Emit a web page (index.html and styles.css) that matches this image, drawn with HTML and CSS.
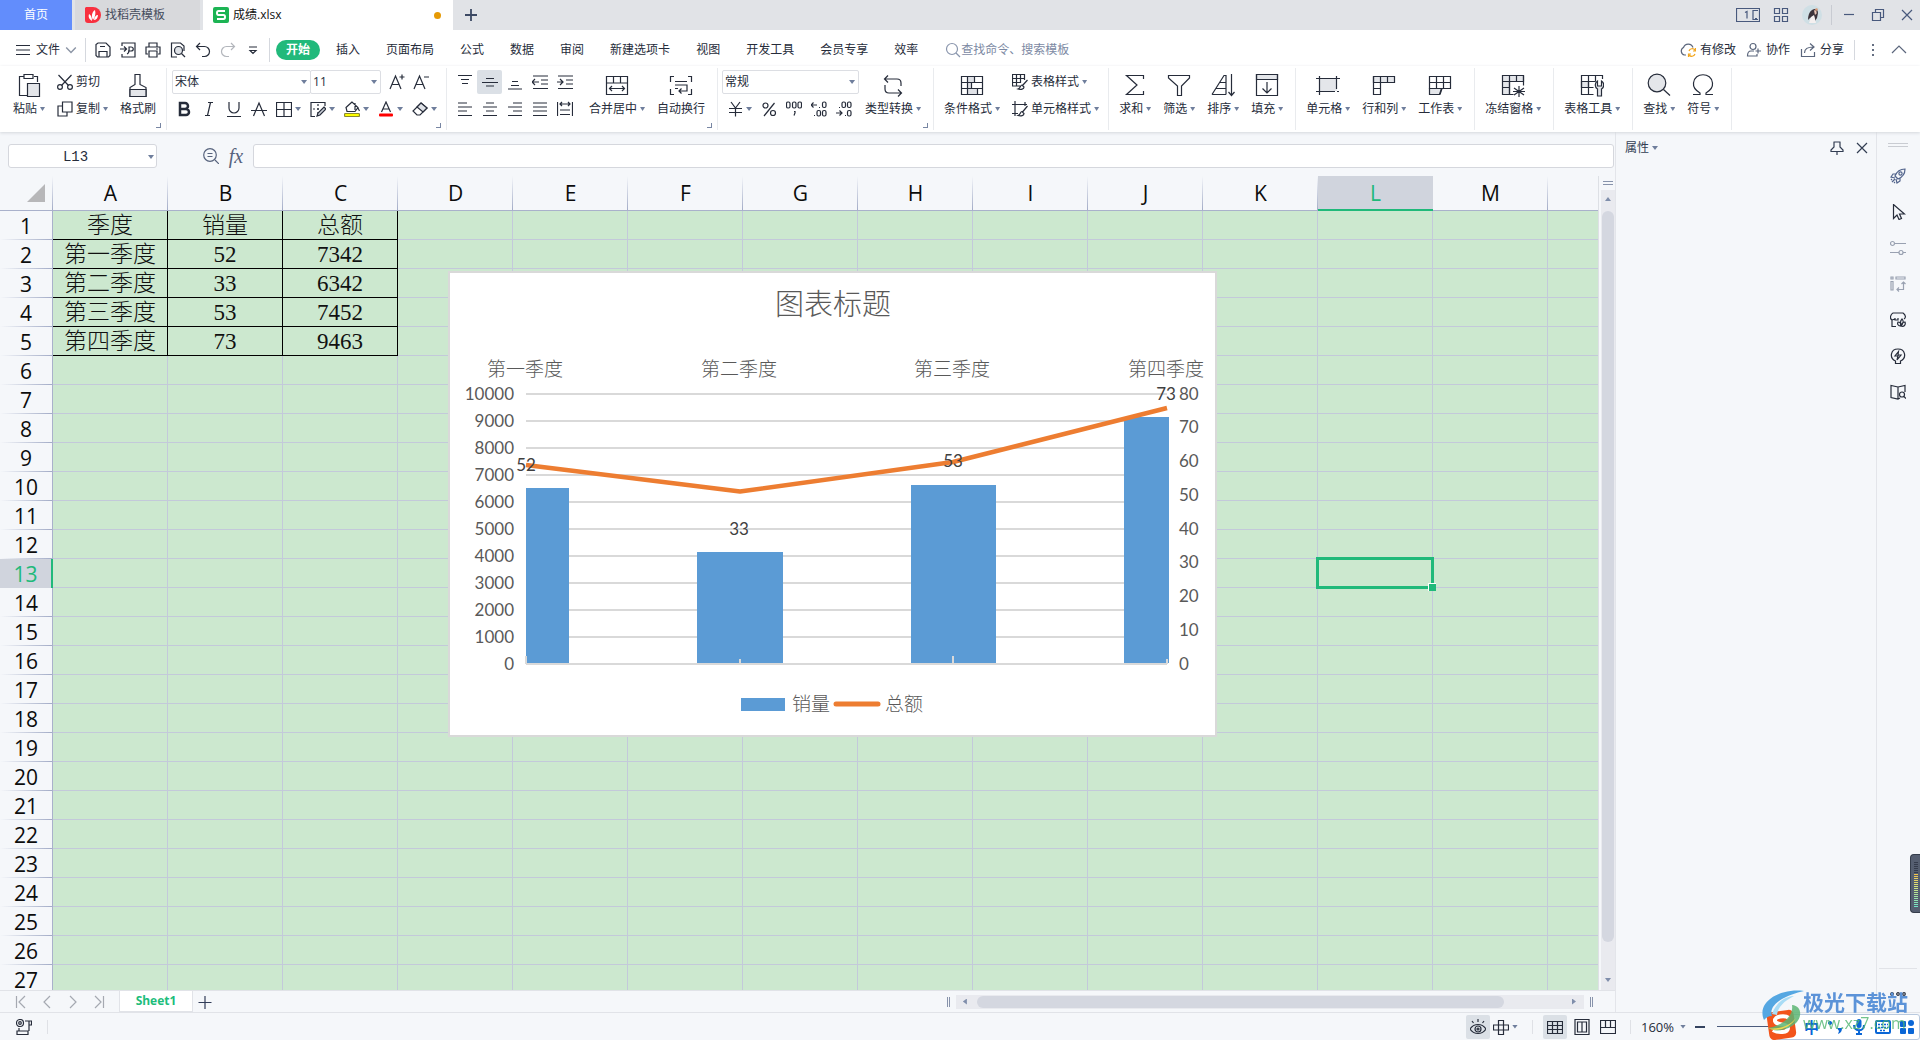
FILE: index.html
```html
<!DOCTYPE html>
<html lang="zh-CN">
<head>
<meta charset="utf-8">
<title>成绩.xlsx</title>
<link rel="stylesheet" href="styles.css">
</head>
<body>
<header class="titlebar">
  <button class="tab tab-home">首页</button>
  <button class="tab tab-docer"><svg class="logo" viewBox="0 0 16 16"><path d="M1 0h7a8 8 0 0 1 0 16H3a3 3 0 0 1-3-3V1z" fill="#f8303f"/><path d="M7 14C4 12 3 10 4 7c2 1 3 3 3 7zM8 13C6 9 7 5 10 3c1 4 0 7-2 10zM9 13c0-3 2-5 4-5 0 3-2 5-4 5z" fill="#fff"/></svg>找稻壳模板</button>
  <button class="tab tab-file"><svg class="logo" viewBox="0 0 16 16"><rect width="16" height="16" rx="2" fill="#1cb454"/><path d="M12 4H5.500Q4 4 4 6t1.500 2h5Q12 8 12 10t-1.500 2H4" fill="none" stroke="#fff" stroke-width="2"/></svg>成绩.xlsx<i class="dot"></i></button>
  <button class="new-tab" aria-label="新建"><svg class="i s16" viewBox="0 0 16 16"><path d="M8 2v12M2 8h12" stroke-width="1.800"/></svg></button>
  <div class="window-tools">
    <button aria-label="窗口"><svg class="i w24" viewBox="0 0 24 16"><path d="M.5 1.500h23v13H.5zM22 3.500h-5v9h5M9 5.500l2-1v7M19 11.500h2"/></svg></button>
    <button aria-label="应用"><svg class="i s16" viewBox="0 0 16 16"><path d="M1.500 1.500h5v5h-5zM9.500 1.500h5v5h-5zM1.500 9.500h5v5h-5zM9.500 9.500h5v5h-5z"/></svg></button>
    <button aria-label="账户"><svg class="s20" viewBox="0 0 20 20"><circle cx="10" cy="10" r="10" fill="#cfdfe5"/><path d="M10 5c3-2 6-1 6 3l-1 5-2 3-1-5-4 2-2 2c0-4 1-8 4-10z" fill="#3c343c"/><path d="M12 5.500c2-1 3 1 2.500 3L13 10z" fill="#e9c5b5"/><path d="M9 12l3-2 2 8H7z" fill="#f5f0f0"/><circle cx="14.500" cy="4.500" r="1.300" fill="#d99a78"/></svg></button>
    <span class="vline"></span>
    <button aria-label="最小化"><svg class="i s16" viewBox="0 0 16 16"><path d="M3 7.500h10"/></svg></button>
    <button aria-label="还原"><svg class="i s16" viewBox="0 0 16 16"><path d="M2.500 5.500h8v8h-8zM5.500 5V2.500h8v8H11"/></svg></button>
    <button aria-label="关闭"><svg class="i s16" viewBox="0 0 16 16"><path d="M3 3l10 10M13 3L3 13"/></svg></button>
  </div>
</header>

<nav class="menubar">
  <button class="file-menu"><svg class="i s16" viewBox="0 0 16 16"><path d="M1 3.500h14M1 8h14M1 12.500h14"/></svg>文件<svg class="i chev" viewBox="0 0 10 10"><path d="M1 3l4 4 4-4"/></svg></button>
  <span class="vline"></span>
  <div class="quick">
    <button aria-label="保存"><svg class="i s16" viewBox="0 0 16 16"><path d="M3 1h8l4 4v8.500L13.500 15h-11L1 13.500v-11zM4 15V9.500h8V15M5 4.500h5"/></svg></button>
    <button aria-label="输出PDF"><svg class="i s16" viewBox="0 0 16 16"><path d="M2 4V1h13v14H2v-3M0 7h6M4 4.500L6.500 7 4 9.500M7 12c3-1 2-5 2-7h2c3 0 3 4 0 4H8"/></svg></button>
    <button aria-label="打印"><svg class="i s16" viewBox="0 0 16 16"><path d="M4 5V1h8v4M3 12H1V5h14v7h-2M4 9h8v6H4zM11 7h2"/></svg></button>
    <button aria-label="打印预览"><svg class="i s16" viewBox="0 0 16 16"><path d="M7 15H1.500V1h9L14 4v5"/><circle cx="8.500" cy="8.500" r="4" fill="#dfe2e7"/><path d="M11.500 11.500L15 15"/></svg></button>
    <button aria-label="撤销"><svg class="i s16" viewBox="0 0 16 16"><path d="M5 1L1.500 4.500 5 8M2 4.500h7.500a5 5 0 0 1 0 10H7"/></svg></button>
    <button aria-label="恢复" class="off"><svg class="i s16" viewBox="0 0 16 16"><path d="M11 1l3.500 3.500L11 8M14 4.500H6.500a5 5 0 0 0 0 10H9"/></svg></button>
    <button aria-label="自定义"><svg class="i s16" viewBox="0 0 16 16"><path d="M4 5h8M5 8.500h6L8 11.500z"/></svg></button>
  </div>
  <span class="vline"></span>
  <div class="tabs">
    <button class="on">开始</button><button>插入</button><button>页面布局</button><button>公式</button><button>数据</button><button>审阅</button><button>新建选项卡</button><button>视图</button><button>开发工具</button><button>会员专享</button><button>效率</button>
  </div>
  <label class="search"><svg class="i s16" viewBox="0 0 16 16"><circle cx="7" cy="7" r="5.500"/><path d="M11 11l4 4"/></svg><input type="text" placeholder="查找命令、搜索模板" aria-label="查找命令"></label>
  <div class="share">
    <button><svg class="i s16" viewBox="0 0 16 16"><path d="M6 13H4.500a4 4 0 0 1-1-7.500 5 5 0 0 1 9.500 0"/><path d="M9 9a3.500 3.500 0 0 1 6-1M15 12a3.500 3.500 0 0 1-6 1M15.500 6v3H13M8.500 15v-3H11" stroke="#f2a51d"/></svg>有修改</button>
    <button><svg class="i s16" viewBox="0 0 16 16"><circle cx="7" cy="4.500" r="3"/><path d="M8 9H5C2.500 9 1.500 10.500 1.500 14H11v-2M12 6.500v5M9.500 9H15"/></svg>协作</button>
    <button><svg class="i s16" viewBox="0 0 16 16"><path d="M1.500 7v7.500h13V10M4.500 11c0-4 3-6 9-6M10 1.500L14 5l-4 3.500"/></svg>分享</button>
    <span class="vline"></span>
    <button aria-label="更多"><svg class="s16" viewBox="0 0 16 16" fill="#656f82"><path d="M7 2h2v2H7zM7 7h2v2H7zM7 12h2v2H7z"/></svg></button>
    <button aria-label="收起"><svg class="i s16" viewBox="0 0 16 16"><path d="M1 11l7-7 7 7"/></svg></button>
  </div>
</nav>

<section class="ribbon">
  <div class="group clip">
    <button class="big"><svg class="i s24" viewBox="0 0 24 24"><path d="M7 3.500H2.500v19H10M17 3.500h3.500V9M7 1.500h9v4H7z"/><path d="M10.500 10.500h12v13h-12z" fill="#e4e6ea"/></svg><span>粘贴<i class="caret"></i></span></button>
    <div class="rows">
      <button class="small"><svg class="i s16" viewBox="0 0 16 16"><path d="M1.500 1l10 10.500M14.500 1l-10 10.500"/><circle cx="3" cy="13" r="2.400"/><circle cx="13" cy="13" r="2.400"/></svg>剪切</button>
      <button class="small"><svg class="i s16" viewBox="0 0 16 16"><path d="M5.500 1h9.500v10H5.500zM5 5H1v10h9v-4"/></svg>复制<i class="caret"></i></button>
    </div>
    <button class="big"><svg class="i s24" viewBox="0 0 24 24"><path d="M4 23.500v-9l5-3V1.500h5v10l6 3v9z"/><path d="M4 16.500h16v7H4z" fill="#e4e6ea"/></svg><span>格式刷</span></button>
    <i class="launch"></i>
  </div>
  <div class="group font">
    <div class="rows">
      <div class="line">
        <span class="combos"><span class="combo name"><select aria-label="字体"><option>宋体</option></select><i class="caret"></i></span><span class="combo size"><select aria-label="字号"><option>11</option></select><i class="caret"></i></span></span>
        <button aria-label="增大字号"><svg class="i s16" viewBox="0 0 16 16"><path d="M1 15L6.500 2 12 15M3 10.500h7M13 .5v5M10.500 3h5"/></svg></button>
        <button aria-label="减小字号"><svg class="i s16" viewBox="0 0 16 16"><path d="M1 15L6.500 2 12 15M3 10.500h7M11 3h5"/></svg></button>
      </div>
      <div class="line tools">
        <button aria-label="加粗"><svg class="i s16" viewBox="0 0 16 16"><path d="M4 2h5a3 3 0 0 1 0 6H4zM4 8h6a3 3 0 0 1 0 6H4z" stroke-width="2.500"/></svg></button>
        <button aria-label="倾斜"><svg class="i s16" viewBox="0 0 16 16"><path d="M7 1.500h5M4 14.500h5M9.500 1.500l-3 13"/></svg></button>
        <button aria-label="下划线"><svg class="i s16" viewBox="0 0 16 16"><path d="M3 1v6a5 5 0 0 0 10 0V1M1 15.500h14"/></svg></button>
        <button aria-label="删除线"><svg class="i s16" viewBox="0 0 16 16"><path d="M2.500 15L8 2l5.500 13M0 9.500h16"/></svg></button>
        <button aria-label="边框"><svg class="i s16" viewBox="0 0 16 16"><path d="M.5 1.500h15v14H.5zM8 1.500v14M.5 8.500h15"/></svg><i class="caret"></i></button>
        <button aria-label="绘制边框"><svg class="i s16" viewBox="0 0 16 16"><path d="M15 5V1.500H1v14h4"/><path d="M8 3v11M3 8h7" stroke-dasharray="2 2"/><path d="M14 6l2 2-6 6-3 1 1-3z" fill="#c9ced6"/></svg><i class="caret"></i></button>
        <button aria-label="填充颜色"><svg class="i s16" viewBox="0 0 16 16"><path d="M8 1L2 6.500l1 4h8l3-4zM11 2v7M14 7l1.500 3"/><rect x=".5" y="12.500" width="15" height="3" rx="1" fill="#ff0" stroke="#8a8a30"/></svg><i class="caret"></i></button>
        <button aria-label="字体颜色"><svg class="i s16" viewBox="0 0 16 16"><path d="M3.500 11L8 1l4.500 10M5 8h6"/><rect x="1" y="12.500" width="14" height="3" rx="1" fill="red" stroke="none"/></svg><i class="caret"></i></button>
        <button aria-label="清除"><svg class="i s16" viewBox="0 0 16 16"><path d="M9 2l6 5-7 7H5L1 10z"/><path d="M9 2l6 5-4 4-6-5z" fill="#dfe2e7"/></svg><i class="caret"></i></button>
      </div>
    </div>
    <i class="launch"></i>
  </div>
  <div class="group align">
    <div class="cells">
      <button aria-label="顶端对齐"><svg class="i s16" viewBox="0 0 16 16"><path d="M1 1.500h14M4 5.500h8M5 9.500h6"/></svg></button>
      <button aria-label="垂直居中" class="on"><svg class="i s16" viewBox="0 0 16 16"><path d="M4 4.500h8M0 8.500h16M4 12h8"/></svg></button>
      <button aria-label="底端对齐"><svg class="i s16" viewBox="0 0 16 16"><path d="M5 7.500h6M4 11.500h8M1 15h14"/></svg></button>
      <button aria-label="减少缩进"><svg class="i s16" viewBox="0 0 16 16"><path d="M1 2h15M9 6h7M9 10h7M1 14.500h15M0 8h7M3 5L0 8l3 3"/></svg></button>
      <button aria-label="增加缩进"><svg class="i s16" viewBox="0 0 16 16"><path d="M1 2h15M9 6h7M9 10h7M1 14.500h15M0 8h6M3 5l3 3-3 3"/></svg></button>
      <button aria-label="左对齐"><svg class="i s16" viewBox="0 0 16 16"><path d="M1 2h9M1 6h14M1 10h9M1 14.500h14"/></svg></button>
      <button aria-label="居中"><svg class="i s16" viewBox="0 0 16 16"><path d="M4 2h8M1 6h14M4 10h8M1 14.500h14"/></svg></button>
      <button aria-label="右对齐"><svg class="i s16" viewBox="0 0 16 16"><path d="M6 2h9M1 6h14M6 10h9M1 14.500h14"/></svg></button>
      <button aria-label="两端对齐"><svg class="i s16" viewBox="0 0 16 16"><path d="M1 2h14M1 6h14M1 10h14M1 14.500h14"/></svg></button>
      <button aria-label="分散对齐"><svg class="i s16" viewBox="0 0 16 16"><path d="M.5 1v14M15.500 1v14M3 3h10M5 1L3 3l2 2M11 1l2 2-2 2M3 9h10M3 13.500h10"/></svg></button>
    </div>
    <button class="big"><svg class="i s24" viewBox="0 0 24 24"><path d="M1.500 3.500h21v18h-21zM1.500 10h21M8.500 3.500V10M15.500 3.500V10M5 15.500h14M7 13l-2.500 2.500L7 18M17 13l2.500 2.500L17 18"/></svg><span>合并居中<i class="caret"></i></span></button>
    <button class="big"><svg class="i s24" viewBox="0 0 24 24"><path d="M5 3.500H1.500V9M19 3.500h3.500V9M5 21.500H1.500V16M19 21.500h3.500V16M6 8.500h12M6 12h12v6h-8M12.500 15.500L10 18l2.500 2.500M6 15.500h3"/></svg><span>自动换行</span></button>
    <i class="launch"></i>
  </div>
  <div class="group number">
    <div class="rows">
      <span class="combo format"><select aria-label="数字格式"><option>常规</option></select><i class="caret"></i></span>
      <div class="line tools">
        <button aria-label="货币"><svg class="i s16" viewBox="0 0 16 16"><path d="M4 1l4.500 6L13 1M2 7.500h13M2 11.500h13M8.500 7v8.500"/></svg><i class="caret"></i></button>
        <button aria-label="百分比"><svg class="i s16" viewBox="0 0 16 16"><circle cx="4.500" cy="4.500" r="2.500"/><circle cx="12" cy="12" r="2.500"/><path d="M13.500 2L3 15"/></svg></button>
        <button aria-label="千位分隔"><svg class="i s16" viewBox="0 0 16 16"><rect x=".5" y="1" width="3.500" height="6" rx="1.500"/><rect x="6.500" y="1" width="3.500" height="6" rx="1.500"/><rect x="12" y="1" width="3.500" height="6" rx="1.500"/><path d="M8 10.500h1V12l-1 2.500"/></svg></button>
        <button aria-label="增加小数"><svg class="i s16" viewBox="0 0 16 16"><path d="M0 4h6M2.500 1.500L0 4l2.500 2.500M8 6.500h1M3 14.500h1"/><rect x="11.500" y="1" width="3.500" height="5.500" rx="1.500"/><rect x="6" y="9.500" width="3.500" height="5.500" rx="1.500"/><rect x="11.500" y="9.500" width="3.500" height="5.500" rx="1.500"/></svg></button>
        <button aria-label="减少小数"><svg class="i s16" viewBox="0 0 16 16"><path d="M0 12h6M3.500 9.500L6 12l-2.500 2.500M9 14.500h1M3 6.500h1"/><rect x="11.500" y="1" width="3.500" height="5.500" rx="1.500"/><rect x="6" y="1" width="3.500" height="5.500" rx="1.500"/><rect x="11.500" y="9.500" width="3.500" height="5.500" rx="1.500"/></svg></button>
      </div>
    </div>
    <button class="big"><svg class="i s24" viewBox="0 0 24 24"><path d="M7 2.500L3.500 6 7 9.500M4 6h12q4 0 4 4v3M4 12v4q0 4 4 4h12M17 16.500l3.500 3.500-3.500 3.500"/></svg><span>类型转换<i class="caret"></i></span></button>
    <i class="launch"></i>
  </div>
  <div class="group styles">
    <button class="big"><svg class="i s24" viewBox="0 0 24 24"><path d="M8 4h6v6H8zM8 10h4v6H8zM8 16h9v6H8z" fill="#e0e2e7" stroke="none"/><path d="M1.500 3.500h21v18h-21zM1.500 9.500h21M1.500 15.500h21M7.500 3.500v18M14.500 3.500v6M11.500 9.500v6M17.500 15.500v6"/></svg><span>条件格式<i class="caret"></i></span></button>
    <div class="rows">
      <button class="small"><svg class="i s16" viewBox="0 0 16 16"><path d="M8 12H.5V.5h12V6M.5 4.500h12M.5 8.500H9M4.500.5V12M8.500.5V9M15.500 6l-5 5.500M10 11c-2 0-1 3-4 4 3 1 6 0 6-2z"/></svg>表格样式<i class="caret"></i></button>
      <button class="small"><svg class="i s16" viewBox="0 0 16 16"><path d="M0 3.500h15M3 0v15M0 12.500h6M13 1v4M15.500 5l-5 6M10 10.500c-2 0-1 3-4 4 3 1 6 0 6-2z"/></svg>单元格样式<i class="caret"></i></button>
    </div>
  </div>
  <div class="group">
    <button class="big"><svg class="i s24" viewBox="0 0 24 24"><path d="M20.500 6V2.500h-17L14 12 3.500 21.500h17V18"/></svg><span>求和<i class="caret"></i></span></button>
    <button class="big"><svg class="i s24" viewBox="0 0 24 24"><path d="M1.500 2.500h21V5L14.500 13v9.500h-4V13L1.500 5z"/></svg><span>筛选<i class="caret"></i></span></button>
    <button class="big"><svg class="i s24" viewBox="0 0 24 24"><path d="M1 21.500L13 2.500h2v19M1 21.500h14M5 15.500h10M9 9.500h6M20.500 1v21M17.500 19l3 3.500 3-3.500"/></svg><span>排序<i class="caret"></i></span></button>
    <button class="big"><svg class="i s24" viewBox="0 0 24 24"><path d="M1.500 1.500h21v5h-21z" fill="#e4e6ea"/><path d="M1.500 1.500h21v21h-21zM12 9v11M7.500 15.500L12 20l4.500-4.500"/></svg><span>填充<i class="caret"></i></span></button>
  </div>
  <div class="group">
    <button class="big"><svg class="i s24" viewBox="0 0 24 24"><path d="M4 6h17v12H4z" fill="#e4e6ea" stroke="none"/><path d="M0 5.500h24M0 18.500h19M3.500 3v19M20.500 3v13M21 18.500h2"/></svg><span>单元格<i class="caret"></i></span></button>
    <button class="big"><svg class="i s24" viewBox="0 0 24 24"><path d="M1.500 3.500h21v6h-21z" fill="#e4e6ea"/><path d="M1.500 3.500v18h7v-18M15.500 3.500v6M1.500 15.500h7"/></svg><span>行和列<i class="caret"></i></span></button>
    <button class="big"><svg class="i s24" viewBox="0 0 24 24"><path d="M1.500 15.500h12l-2 6h-10z" fill="#e4e6ea"/><path d="M22.500 15.500V3.500h-21v12zM1.500 9.500h21M8.500 3.500v12M15.500 3.500v12M22.500 15.500H14l-2 6"/></svg><span>工作表<i class="caret"></i></span></button>
  </div>
  <div class="group">
    <button class="big"><svg class="i s24" viewBox="0 0 24 24"><path d="M1.500 2.500h21v6h-14v13h-7z" fill="#e4e6ea"/><path d="M22.500 2.500v10M1.500 8.500h7M1.500 14.500h7M8.500 2.500v19h4M15.500 2.500v6M18 13v11M13 15l10 7M23 15l-10 7M12 18.500h12"/></svg><span>冻结窗格<i class="caret"></i></span></button>
  </div>
  <div class="group">
    <button class="big"><svg class="i s24" viewBox="0 0 24 24"><path d="M1.500 8.500h7v6h-7z" fill="#e4e6ea"/><path d="M22.500 6V2.500h-21v19h12M1.500 8.500h14M1.500 14.500h12M8.500 2.500v19M15.500 2.500v6"/><path d="M17.500 8c-3 2-3 6 0 8v7h4v-7c3-2 3-6 0-8v5h-4z" fill="#e4e6ea"/></svg><span>表格工具<i class="caret"></i></span></button>
  </div>
  <div class="group">
    <button class="big"><svg class="i s24" viewBox="0 0 24 24"><circle cx="10" cy="10" r="8.800" fill="#e4e6ea"/><path d="M16.500 16.500l6.500 6"/></svg><span>查找<i class="caret"></i></span></button>
    <button class="big"><svg class="i s24" viewBox="0 0 24 24"><path d="M2 21.500h7V20C4 17 2 14 2.500 10c1-11 18-11 19 0 .5 4-1.500 7-6.500 10v1.500h7"/></svg><span>符号<i class="caret"></i></span></button>
  </div>
</section>

<main class="work">
  <section class="book">
    <div class="formula">
      <span class="namebox"><input type="text" value="L13" aria-label="名称框"><i class="caret"></i></span>
      <button aria-label="缩放"><svg class="i s16" viewBox="0 0 16 16"><circle cx="7" cy="7" r="6.300"/><path d="M12 12l4 4M4.500 5.500h5M4.500 8.500h5"/></svg></button>
      <button class="fx" aria-label="插入函数">fx</button>
      <input class="entry" type="text" aria-label="编辑栏">
    </div>
    <div class="view">
      <div class="sheet">
        <table>
          <colgroup><col class="c0"><col span="14" class="c1"></colgroup>
          <thead><tr><th class="corner"><svg viewBox="0 0 18 18"><path d="M18 0v18H0z" fill="#b7b7b9"/></svg></th><th>A</th><th>B</th><th>C</th><th>D</th><th>E</th><th>F</th><th>G</th><th>H</th><th>I</th><th>J</th><th>K</th><th class="cur">L</th><th>M</th><th></th></tr></thead>
          <tbody>
<tr><th>1<td class="d">季度<td class="d">销量<td class="d">总额<td><td><td><td><td><td><td><td><td><td><td>
<tr><th>2<td class="d">第一季度<td class="d">52<td class="d">7342<td><td><td><td><td><td><td><td><td><td><td>
<tr><th>3<td class="d">第二季度<td class="d">33<td class="d">6342<td><td><td><td><td><td><td><td><td><td><td>
<tr><th>4<td class="d">第三季度<td class="d">53<td class="d">7452<td><td><td><td><td><td><td><td><td><td><td>
<tr><th>5<td class="d">第四季度<td class="d">73<td class="d">9463<td><td><td><td><td><td><td><td><td><td><td>
<tr><th>6<td><td><td><td><td><td><td><td><td><td><td><td><td><td>
<tr><th>7<td><td><td><td><td><td><td><td><td><td><td><td><td><td>
<tr><th>8<td><td><td><td><td><td><td><td><td><td><td><td><td><td>
<tr><th>9<td><td><td><td><td><td><td><td><td><td><td><td><td><td>
<tr><th>10<td><td><td><td><td><td><td><td><td><td><td><td><td><td>
<tr><th>11<td><td><td><td><td><td><td><td><td><td><td><td><td><td>
<tr><th>12<td><td><td><td><td><td><td><td><td><td><td><td><td><td>
<tr><th class="cur">13<td><td><td><td><td><td><td><td><td><td><td><td class="sel"><td><td>
<tr><th>14<td><td><td><td><td><td><td><td><td><td><td><td><td><td>
<tr><th>15<td><td><td><td><td><td><td><td><td><td><td><td><td><td>
<tr><th>16<td><td><td><td><td><td><td><td><td><td><td><td><td><td>
<tr><th>17<td><td><td><td><td><td><td><td><td><td><td><td><td><td>
<tr><th>18<td><td><td><td><td><td><td><td><td><td><td><td><td><td>
<tr><th>19<td><td><td><td><td><td><td><td><td><td><td><td><td><td>
<tr><th>20<td><td><td><td><td><td><td><td><td><td><td><td><td><td>
<tr><th>21<td><td><td><td><td><td><td><td><td><td><td><td><td><td>
<tr><th>22<td><td><td><td><td><td><td><td><td><td><td><td><td><td>
<tr><th>23<td><td><td><td><td><td><td><td><td><td><td><td><td><td>
<tr><th>24<td><td><td><td><td><td><td><td><td><td><td><td><td><td>
<tr><th>25<td><td><td><td><td><td><td><td><td><td><td><td><td><td>
<tr><th>26<td><td><td><td><td><td><td><td><td><td><td><td><td><td>
<tr><th>27<td><td><td><td><td><td><td><td><td><td><td><td><td><td>
          </tbody>
        </table>
        <figure class="chart">
          <svg viewBox="450 273 765 462" role="img" aria-label="图表标题">
            <text class="t-title" x="833" y="315">图表标题</text>
            <g class="t-cat"><text x="525" y="376">第一季度</text><text x="739" y="376">第二季度</text><text x="952" y="376">第三季度</text><text x="1166" y="376">第四季度</text></g>
            <path d="M526 394h641M526 421h641M526 448h641M526 475h641M526 502h641M526 529h641M526 556h641M526 583h641M526 610h641M526 637h641" stroke="#d9d9d9" stroke-width="2"/>
            <path d="M526 488h43v175h-43zM697 552h86v111h-86zM911 485h85v178h-85zM1124 417h45v246h-45z" fill="#5b9bd5"/>
            <path d="M526 664h641M526 656v8M740 659v5M953 656v8M1167 659v5" stroke="#d9d9d9" stroke-width="2"/>
            <path d="M526 465L740 491.500 953 462 1167 408" fill="none" stroke="#ed7d31" stroke-width="4.500" stroke-linejoin="round"/>
            <g class="t-left"><text x="514" y="400">10000</text><text x="514" y="427">9000</text><text x="514" y="454">8000</text><text x="514" y="481">7000</text><text x="514" y="508">6000</text><text x="514" y="535">5000</text><text x="514" y="562">4000</text><text x="514" y="589">3000</text><text x="514" y="616">2000</text><text x="514" y="643">1000</text><text x="514" y="670">0</text></g>
            <g class="t-right"><text x="1179" y="400">80</text><text x="1179" y="433">70</text><text x="1179" y="467">60</text><text x="1179" y="501">50</text><text x="1179" y="535">40</text><text x="1179" y="568">30</text><text x="1179" y="602">20</text><text x="1179" y="636">10</text><text x="1179" y="670">0</text></g>
            <g class="t-val"><text x="526" y="471">52</text><text x="739" y="535">33</text><text x="953" y="467">53</text><text x="1166" y="400">73</text></g>
            <rect x="741" y="698" width="44" height="13" fill="#5b9bd5"/>
            <path d="M836 704h42" stroke="#ed7d31" stroke-width="5" stroke-linecap="round"/>
            <g class="t-cat"><text x="811" y="711">销量</text><text x="904" y="711">总额</text></g>
          </svg>
        </figure>
      </div>
      <div class="vscroll"><span class="split"></span><i class="arrow up"></i><div class="vtrack"><span class="vthumb"></span></div><i class="arrow down"></i></div>
    </div>
    <div class="sheetbar">
      <div class="nav">
        <button aria-label="第一张"><svg class="i s16" viewBox="0 0 16 16"><path d="M3.500 2v12M12 2L6 8l6 6"/></svg></button>
        <button aria-label="上一张"><svg class="i s16" viewBox="0 0 16 16"><path d="M11 2L5 8l6 6"/></svg></button>
        <button aria-label="下一张"><svg class="i s16" viewBox="0 0 16 16"><path d="M5 2l6 6-6 6"/></svg></button>
        <button aria-label="最后一张"><svg class="i s16" viewBox="0 0 16 16"><path d="M12.500 2v12M4 2l6 6-6 6"/></svg></button>
      </div>
      <button class="sheet-tab">Sheet1</button>
      <button class="add" aria-label="新建工作表"><svg class="i s16" viewBox="0 0 16 16"><path d="M8 2v13M1.500 8.500h13"/></svg></button>
      <div class="hscroll"><i class="grip"></i><div class="htrack"><i class="arrow left"></i><span class="hthumb"></span><i class="arrow right"></i></div><i class="grip"></i></div>
    </div>
  </section>

  <aside class="props">
    <button>属性<i class="caret"></i></button>
    <span class="fill"></span>
    <button aria-label="固定"><svg class="i s16" viewBox="0 0 16 16"><path d="M4.500 2h7M5 2v5L2 10v1.500h12V10l-3-3V2M8 11.500V15"/></svg></button>
    <button aria-label="关闭窗格"><svg class="i s16" viewBox="0 0 16 16"><path d="M3 3l10 10M13 3L3 13"/></svg></button>
  </aside>

  <aside class="strip">
    <i class="handle"></i>
    <button class="blue" aria-label="推荐"><svg class="i s16" viewBox="0 0 16 16"><path d="M5 8c2-5 5-7 10-7 0 5-2 8-7 10zM6 6H3L1 9l4 1M10 10v3l-3 2-1-4M5 11l-3 3M2 11l-1 1M5 14l-1 1"/><circle cx="10.500" cy="5.500" r="1.600"/></svg></button>
    <button aria-label="选择"><svg class="i s16" viewBox="0 0 16 16"><path d="M3.500.5v14l3.500-3.500 2 4.500 2.500-1-2-4.500h5z"/></svg></button>
    <button class="off" aria-label="设置"><svg class="i s16" viewBox="0 0 16 16"><circle cx="2.500" cy="3.500" r="2"/><path d="M5 3.500h11M0 12.500h9M13 12.500h3"/><circle cx="11" cy="12.500" r="2"/></svg></button>
    <button class="off" aria-label="透视表"><svg class="i s16" viewBox="0 0 16 16"><path d="M1 1h2v2H1zM6 1h9v2H6zM1 5.500h2V14H1zM13.500 6v7.500H7M11.500 8l2-2 2 2M9 11.500l-2 2 2 2"/></svg></button>
    <button aria-label="资源"><svg class="i s16" viewBox="0 0 16 16"><path d="M6 14.500H2V8M2 8C-1 6 1 2 3 1h10c3 2 3 5 1 6M5 6v2h3V6M2 8l3-1M11 14c-3 0-4-2-3-4 2 0 3 2 3 4zM11 14c-1-3 0-6 1-7 2 2 1 5-1 7zM11 14c3 1 5-1 4-4-2 0-4 2-4 4z"/></svg></button>
    <button aria-label="灵感"><svg class="i s16" viewBox="0 0 16 16"><path d="M5.500 13C-1 10 .5 1 8 1s9 9 2.500 12v2.500h-5zM8.500 3.500L5 8h3l-1 4 4-5H8z"/></svg></button>
    <button aria-label="查阅"><svg class="i s16" viewBox="0 0 16 16"><path d="M8 3L1 1.500v12L8 15l2-1M8 3l7-1.500V8M8 3v12"/><circle cx="12" cy="10.500" r="2.500"/><path d="M14 12.500l2 2"/></svg></button>
    <span class="more"><svg class="i s16" viewBox="0 0 16 16"><circle cx="2" cy="8" r="1.300"/><circle cx="8" cy="8" r="1.300"/><circle cx="14" cy="8" r="1.300"/></svg></span>
  </aside>
</main>

<footer class="status">
  <button class="macro" aria-label="宏"><svg class="i s16" viewBox="0 0 16 16"><circle cx="4" cy="4" r="3.500"/><circle cx="4" cy="4" r="1.300"/><path d="M9 2h4v10M13 2h2.500v4H13M3 9v3M1 12h11v3.500H1z"/></svg></button>
  <span class="vline"></span>
  <span class="fill"></span>
  <button class="on" aria-label="护眼模式"><svg class="i s16" viewBox="0 0 16 16"><path d="M0 10c4-6 12-6 16 0-4 6-12 6-16 0z"/><circle cx="8" cy="10" r="3"/><circle cx="8" cy="10" r="1"/><path d="M8 0v3M2 2l1.500 2M14 2l-1.500 2"/></svg></button>
  <button class="read" aria-label="阅读模式"><svg class="i s16" viewBox="0 0 16 16"><path d="M5.500 1.500h5v14h-5zM.5 6h15v5H.5z"/></svg><i class="caret"></i></button>
  <span class="vline"></span>
  <button class="on" aria-label="普通视图"><svg class="i s16" viewBox="0 0 16 16"><path d="M.5 2.500h15v12H.5zM.5 6.500h15M.5 10.500h15M5.500 2.500v12M10.500 2.500v12"/></svg></button>
  <button class="sq" aria-label="页面布局视图"><svg class="i s16" viewBox="0 0 16 16"><path d="M1 .5h14v15H1zM3.500 3h9v10h-9zM8 3v10"/></svg></button>
  <button class="sq" aria-label="分页预览"><svg class="i s16" viewBox="0 0 16 16"><path d="M.5 1.500h15v13H.5zM5.500 1.500v7M.5 8.500h15M10.500 8.500v-7"/></svg></button>
  <span class="vline"></span>
  <button class="pct">160%<i class="caret"></i></button>
  <button class="minus" aria-label="缩小"></button>
  <input class="zoom" type="range" aria-label="缩放比例">
</footer>

<div class="meter"><i></i></div>
<div class="ime">
  <span>中</span>
  <svg viewBox="0 0 16 16"><path d="M3 2a2 2 0 1 0 .1 0zM10 9h5c0 3-1 5-4 6l1-3z" fill="#0a66d6"/></svg>
  <svg viewBox="0 0 16 16"><rect x="5.500" y="0" width="5" height="9" rx="2.500" fill="#0a66d6"/><path d="M3 6c0 7 10 7 10 0M8 11v4M5 15h6" fill="none" stroke="#0a66d6" stroke-width="2"/></svg>
  <svg viewBox="0 0 16 16"><rect x="1" y="2" width="14" height="12" rx="1" fill="none" stroke="#0a66d6" stroke-width="2"/><path d="M3 5.500h10M3 8.500h10M5 11.500h6" stroke="#0a66d6" stroke-width="1.500" stroke-dasharray="2 1"/></svg>
  <svg viewBox="0 0 16 16" fill="#0a66d6"><rect x="1" y="2" width="6" height="6" rx="1"/><rect x="9" y="1" width="6" height="6" rx="3"/><rect x="1" y="9" width="6" height="6" rx="1"/><rect x="9" y="9" width="6" height="6" rx="1"/></svg>
</div>
<div class="mark">
  <svg viewBox="0 0 46 50"><rect x="8" y="21" width="27" height="28" rx="5" transform="rotate(-8 21 35)" fill="#f2541b"/><path d="M29 28c-4-3-15-2-14 3s13 2 13 7-10 5-15 2" fill="none" stroke="#fff" stroke-width="4"/><path d="M4 30C-4 12 20-2 44 1 26 5 8 14 12 26c-4 0-6 2-8 4z" fill="#55a7e2"/><path d="M12 24C16 12 26 6 34 6 24 11 18 17 17 25z" fill="#a9dcf5"/><path d="M8 38c14-2 26-12 24-23 11 1 11 15 0 21-8 5-18 6-24 2z" fill="#5cb573" opacity=".85"/><path d="M8 38c10 2 22-2 28-10-5 9-18 15-28 10z" fill="#f3d84d"/></svg>
  <div><strong>极光下载站</strong><em>www.xz7.com</em></div>
</div>
</body>
</html>
```
FILE: styles.css
```css
* { box-sizing: border-box; }
body {
  margin: 0; height: 100vh; display: flex; flex-direction: column; overflow: hidden;
  background: #f5f7fa; color: #262c3a;
  font: 12px/16px "Open Sans", "Noto Sans CJK SC", sans-serif;
}
button { border: 0; padding: 0; background: none; color: inherit; font: inherit; display: flex; align-items: center; white-space: nowrap; }
input, select { font: inherit; color: inherit; border: 0; padding: 0; background: none; outline: 0; min-width: 0; }
svg { display: block; flex: none; }
.i { fill: none; stroke: currentColor; stroke-width: 1.2; }
.s16 { width: 16px; height: 16px; }
.s20 { width: 20px; height: 20px; }
.s24 { width: 24px; height: 24px; }
.w24 { width: 24px; height: 16px; }
.caret { flex: none; width: 6px; height: 4px; margin-left: 3px; background: #6f7e9c; clip-path: polygon(0 0, 100% 0, 50% 100%); }
.vline { flex: none; width: 1px; background: #d5d8de; }
.fill { flex: 1; }

/* title bar */
.titlebar { flex: none; height: 30px; display: flex; align-items: stretch; gap: 3px; background: #e1e3e7; }
.tab { height: 30px; gap: 4px; }
.tab-home { width: 72px; justify-content: center; background: #628dfc; color: #fff; }
.tab-docer { width: 125px; padding-left: 10px; background: #d8d9dc; color: #454c5c; }
.tab-file { width: 250px; padding: 0 12px 0 10px; background: #fff; color: #111; }
.logo { width: 16px; height: 16px; }
.dot { width: 7px; height: 7px; margin-left: auto; border-radius: 50%; background: #e69a05; }
.new-tab { padding-left: 7px; color: #3c4964; }
.window-tools { margin-left: auto; display: flex; align-items: center; gap: 13px; padding-right: 5px; color: #48597d; }
.window-tools .vline { height: 20px; margin: 0 -4px; background: #c8cbd2; }

/* menu */
.menubar { flex: none; height: 36px; padding: 3px 13px 0 15px; display: flex; align-items: center; background: #fff; }
.menubar > .vline { height: 24px; }
.file-menu { gap: 5px; }
.chev { width: 12px; height: 12px; margin-right: 8px; color: #8c95a5; }
.quick { display: flex; gap: 9px; padding: 0 8px 0 9px; }
.quick .off { color: #b3b6bc; }
.tabs { display: flex; align-items: center; gap: 26px; padding-left: 16px; }
.tabs .on { height: 20px; padding: 0 10px; margin: 0 -10px; border-radius: 10px; background: #21b97b; color: #fff; font-weight: 700; }
.search { display: flex; align-items: center; margin-left: 27px; color: #8a96ad; }
.search input { width: 130px; }
.search input::placeholder { color: #7c89a3; opacity: 1; }
.share { margin-left: auto; display: flex; align-items: center; gap: 10px; }
.share button { gap: 4px; }
.share .vline { height: 20px; }
.share svg.i { color: #5b667c; }

/* ribbon */
.ribbon { position: relative; z-index: 2; flex: none; height: 66px; padding-top: 2px; display: flex; background: #fff; box-shadow: 0 1px 3px #d4d7dc; }
.group { position: relative; flex: none; height: 62px; padding: 2px 12px 0 10px; display: flex; gap: 12px; border-right: 1px solid #e9ebee; }
.big { flex-direction: column; height: 50px; padding-top: 3px; gap: 4px; }
.big span { display: flex; align-items: center; }
.big .caret, .small .caret { width: 5px; }
.rows { display: flex; flex-direction: column; gap: 3px; }
.small { height: 24px; gap: 3px; }
.small .caret { margin-left: 0; }
.line { height: 24px; display: flex; align-items: center; }
.tools { gap: 9px; }
.launch { position: absolute; right: 5px; bottom: 2px; width: 5px; height: 5px; border: solid #7886a3; border-width: 0 1px 1px 0; }
.clip { padding: 2px 10px 0 13px; }
.font { padding: 2px 9px 0 5px; }
.font .line:first-child button { margin-left: 8px; }
.font .tools { padding-left: 4px; }
.combos { display: flex; }
.combo { position: relative; display: flex; height: 24px; border: 1px solid #dcdee3; border-radius: 2px; }
.combo select { appearance: none; width: 100%; padding-left: 2px; }
.combo .caret { position: absolute; right: 3px; top: 9px; }
.name { width: 139px; }
.size { width: 71px; margin-left: -1px; }
.format { width: 137px; }
.align { padding-left: 5px; }
.cells { display: grid; grid-template-columns: repeat(5, 25px); grid-template-rows: 24px 24px; row-gap: 3px; }
.cells button { justify-content: center; }
.cells .on, .status .on { background: #dbe0e6; border-radius: 2px; }
.number { padding-left: 4px; gap: 6px; }
.number .tools { padding-left: 5px; }
.styles { padding-right: 9px; }

/* work area */
.work { flex: 1; min-height: 0; display: flex; }
.book { flex: 1; min-width: 0; display: flex; flex-direction: column; }
.formula { flex: none; height: 44px; padding: 12px 1px 8px 8px; display: flex; }
.namebox { position: relative; width: 149px; margin-right: 46px; display: flex; background: #fff; border: 1px solid #d5d7dd; border-radius: 3px; }
.namebox input { width: 100%; padding: 2px 14px 0 0; text-align: center; font: 14px/20px "Liberation Mono", monospace; }
.namebox .caret { position: absolute; right: 2px; top: 10px; }
.formula button { color: #57637d; }
.fx { width: 34px; justify-content: center; font: italic 20px/22px "Liberation Serif", serif; }
.entry { flex: 1; background: #fff; border: 1px solid #d5d7dd; border-radius: 3px; }

.view { flex: 1; min-height: 0; display: flex; gap: 2px; }
.sheet { position: relative; flex: 1; min-width: 0; overflow: hidden; border-right: 1px solid #dde0e5; }
table { table-layout: fixed; width: 1663px; border-collapse: separate; border-spacing: 0; }
.c0 { width: 53px; }
.c1 { width: 115px; }
th, td { padding: 0; text-align: center; white-space: nowrap; overflow: hidden; }
th { color: #0c0c0c; font: 400 21px/28px "Open Sans", sans-serif; }
thead th { height: 35px; border-bottom: 1px solid #a9b1cb; background: linear-gradient(to bottom, #f5f7fa, #a3acc7) right / 1px 100% no-repeat; }
tbody th { height: 29px; border-right: 1px solid #a9b1cb; background: linear-gradient(to right, #f5f7fa, #a3acc7) bottom / 100% 1px no-repeat; }
.corner svg { width: 18px; height: 18px; margin-left: 27px; }
td { height: 29px; padding-top: 2px; background: #cce8cf; border: solid #c3c9da; border-width: 0 1px 1px 0; font: 300 23px/26px "Liberation Serif", "Noto Sans CJK SC", serif; color: #111; }
td.d { border-color: #000; }
thead .cur { background: #d0d4dd; color: #20b97a; border-bottom: 2px solid #20b97a; }
tbody .cur { background: #d0d4dd; color: #20b97a; border-right: 2px solid #20b97a; }
.sel { position: relative; overflow: visible; }
.sel::before { content: ""; position: absolute; inset: -2px; border: 3px solid #20b97a; }
.sel::after { content: ""; position: absolute; right: -4px; bottom: -4px; width: 7px; height: 7px; background: #20b97a; border: solid #fff; border-width: 1px 0 0 1px; }
.chart { position: absolute; left: 448px; top: 95px; margin: 0; width: 769px; height: 466px; border: 2px solid #d9d9d9; background: #fff; }
.chart svg { width: 100%; height: 100%; }
.chart text { fill: #595959; font-family: Lato, "Noto Sans CJK SC", sans-serif; }
.chart .t-title { font-size: 29px; font-weight: 300; text-anchor: middle; }
.t-cat { font-size: 19px; font-weight: 300; text-anchor: middle; }
.t-left, .t-right, .t-val { font-size: 17px; }
.t-left { text-anchor: end; }
.t-val { text-anchor: middle; }
.chart .t-val text { fill: #404040; }

.vscroll { flex: none; width: 14px; display: flex; flex-direction: column; align-items: center; background: #e9eaef; }
.split { flex: none; align-self: stretch; height: 14px; background: linear-gradient(#8793ab, #8793ab) center 5px / 10px 1px no-repeat, linear-gradient(#8793ab, #8793ab) center 8px / 10px 1px no-repeat, #f5f7fa; }
.arrow { flex: none; width: 6px; height: 4px; background: #7f8eab; }
.up { margin: 7px 0 10px; clip-path: polygon(50% 0, 100% 100%, 0 100%); }
.down { margin: 6px 0 8px; clip-path: polygon(0 0, 100% 0, 50% 100%); }
.left, .right { width: 4px; height: 6px; }
.left { clip-path: polygon(0 50%, 100% 0, 100% 100%); }
.right { margin-left: auto; clip-path: polygon(0 0, 100% 50%, 0 100%); }
.vtrack { flex: 1; width: 12px; }
.vthumb { display: block; height: 96%; border-radius: 6px; background: #d4d7e0; }

.sheetbar { flex: none; height: 22px; display: flex; border-top: 1px solid #e1e3e8; }
.nav { width: 119px; padding-left: 13px; display: flex; gap: 10px; color: #a5a9b1; }
.sheet-tab { width: 74px; justify-content: center; background: #fff; border: solid #e1e3e8; border-width: 0 1px 1px; color: #20bd7b; font-weight: 700; }
.add { padding: 0 4px; color: #323d59; }
.hscroll { width: calc(41% + 6px); margin-left: auto; padding-right: 22px; display: flex; align-items: center; gap: 6px; }
.grip { flex: none; width: 3px; height: 10px; border: solid #8793ab; border-width: 0 1px; }
.htrack { flex: 1; height: 14px; padding: 0 8px 0 7px; display: flex; align-items: center; background: #e9eaef; }
.hthumb { width: 86%; height: 12px; margin-left: 10px; border-radius: 6px; background: #d4d7e0; }

.props { flex: none; width: 261px; padding: 8px 6px 0 9px; display: flex; align-items: flex-start; gap: 9px; border-left: 1px solid #e3e5ea; color: #323d52; }
.props button { height: 16px; }
.strip { flex: none; width: 44px; padding: 11px 2px 0 0; display: flex; flex-direction: column; align-items: center; gap: 20px; border-left: 1px solid #e3e5ea; }
.handle { width: 20px; height: 4px; margin-bottom: 1px; border: solid #c9ccd2; border-width: 1px 0; }
.strip .off { color: #99a1b1; }
.strip .blue { color: #52648c; }
.more { margin-top: auto; width: 38px; height: 44px; padding: 17px 0 0 11px; border-top: 1px solid #e1e3e8; }

/* status bar */
.status { flex: none; height: 28px; display: flex; align-items: center; border-top: 1px solid #e1e3e8; padding-right: 98px; }
.status .vline { height: 14px; background: #dfe1e6; }
.macro { padding: 0 15px 0 16px; }
.status .on { width: 24px; height: 24px; justify-content: center; }
.read { padding: 0 14px 0 3px; }
.status .vline ~ .vline { margin-right: 10px; }
.sq { padding: 0 3px 0 7px; }
.sq + .sq { padding: 0 14px 0 7px; }
.pct { font-size: 13px; }
.pct .caret { margin-left: 6px; }
.minus { width: 10px; height: 2px; margin: 0 12px 0 9px; background: #34435f; }
.zoom { appearance: none; width: 105px; height: 1px; margin: 0; background: #4a5b7c; }
.zoom::-webkit-slider-thumb { appearance: none; width: 1px; height: 1px; background: #4a5b7c; }

/* floating desktop widgets */
.meter { position: fixed; z-index: 4; right: 0; top: 854px; width: 10px; height: 59px; padding: 7px 2px 7px 3px; background: #555e70; border: 1px solid #353d4b; border-right: 0; border-radius: 4px 0 0 4px; }
.meter i { display: block; height: 45px; background: repeating-linear-gradient(transparent 0 1px, #555e70 1px 2px), linear-gradient(#343b4b 0 12px, #f2c14a 12px, #d9e57c 24px, #6fe3c8); }
.ime { position: fixed; z-index: 4; right: 0; bottom: 0; width: 144px; height: 26px; padding: 0 4px 0 27px; display: flex; align-items: center; justify-content: space-between; background: #fff; border: 1px solid #b9c9de; border-radius: 3px; color: #0a66d6; font-size: 15px; font-weight: 700; }
.ime svg { width: 16px; height: 16px; }
.mark { position: fixed; z-index: 5; right: 10px; bottom: 0; display: flex; }
.mark svg { width: 46px; height: 50px; margin-right: -3px; }
.mark strong, .mark em { display: block; font-style: normal; white-space: nowrap; }
.mark strong { width: 107px; font-size: 21px; line-height: 24px; color: #5c93d8; }
.mark em { font-size: 16px; line-height: 18px; color: #4fb56f; opacity: .8; }
```
